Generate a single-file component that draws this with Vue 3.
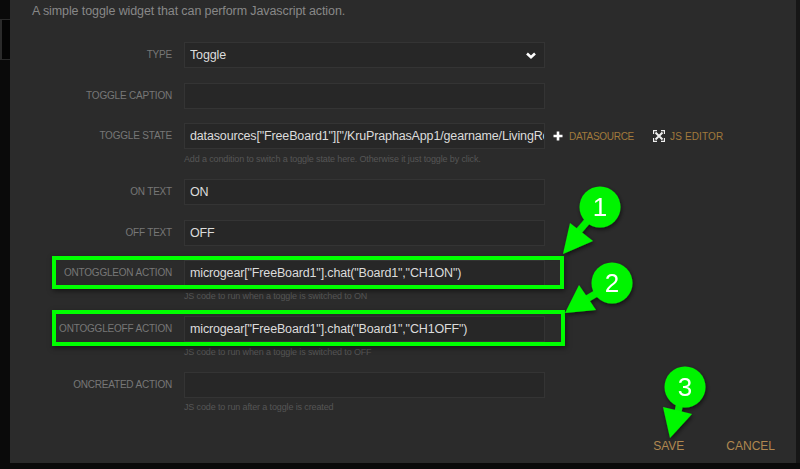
<script setup>
const rows = [
  { label: 'Type', value: 'Toggle', select: true },
  { label: 'Toggle caption', value: '' },
  {
    label: 'Toggle state',
    value: 'datasources["FreeBoard1"]["/KruPraphasApp1/gearname/LivingRoom"]',
    hint: 'Add a condition to switch a toggle state here. Otherwise it just toggle by click.',
    tools: true
  },
  { label: 'On text', value: 'ON' },
  { label: 'Off text', value: 'OFF' },
  {
    label: 'onToggleOn action',
    value: 'microgear["FreeBoard1"].chat("Board1","CH1ON")',
    hint: 'JS code to run when a toggle is switched to ON'
  },
  {
    label: 'onToggleOff action',
    value: 'microgear["FreeBoard1"].chat("Board1","CH1OFF")',
    hint: 'JS code to run when a toggle is switched to OFF'
  },
  { label: 'onCreated action', value: '', hint: 'JS code to run after a toggle is created' }
]
const callouts = [
  { n: 1, cx: 600, cy: 207, head: '563,254 570,223 593,241', shaft: 'M590 218 L578 232' },
  { n: 2, cx: 612, cy: 283, head: '565,313 579,285 596,310', shaft: 'M602 290 L585 300' },
  { n: 3, cx: 685, cy: 387, head: '670,438 663,407 692,414', shaft: 'M680 402 L678 412' }
]
</script>

<template>
  <div class="page">
    <aside class="side">
      <div class="side-gap"></div>
      <div class="side-box"></div>
    </aside>

    <main class="modal">
      <p class="intro">A simple toggle widget that can perform Javascript action.</p>
      <form class="form" @submit.prevent>
        <div v-for="row in rows" :key="row.label" class="row">
          <label class="label">{{ row.label }}</label>
          <div class="body">
            <div class="line">
              <div class="input">
                <span class="value">{{ row.value }}</span>
                <svg v-if="row.select" class="chevron" width="10" height="7" viewBox="0 0 10 7">
                  <path d="M1 1.5 L5 5.2 L9 1.5" fill="none" stroke="#fff" stroke-width="2.6" />
                </svg>
              </div>
              <div v-if="row.tools" class="tools">
                <span class="tool plus">
                  <svg width="10" height="10" viewBox="0 0 10 10">
                    <path d="M5 0.5 V9.5 M0.5 5 H9.5" stroke="#fff" stroke-width="2.6" />
                  </svg>
                  DATASOURCE
                </span>
                <span class="tool js">
                  <svg width="12" height="12" viewBox="0 0 12 12">
                    <path d="M2.5 2.5 L9.5 9.5 M9.5 2.5 L2.5 9.5" stroke="#eee" stroke-width="2" />
                    <path d="M0.5 4 V0.5 H4 M8 0.5 H11.5 V4 M11.5 8 V11.5 H8 M4 11.5 H0.5 V8" fill="none" stroke="#eee" stroke-width="1.3" />
                  </svg>
                  JS EDITOR
                </span>
              </div>
            </div>
            <div v-if="row.hint" class="hint">{{ row.hint }}</div>
          </div>
        </div>
      </form>
      <footer class="actions">
        <button type="button" class="action">Save</button>
        <button type="button" class="action">Cancel</button>
      </footer>
    </main>

    <div class="edge"></div>

    <!-- annotations painted over the screenshot -->
    <div class="mark mark-on"></div>
    <div class="mark mark-off"></div>
    <svg class="callouts" width="800" height="469" viewBox="0 0 800 469">
      <defs>
        <filter id="drop" x="-30%" y="-30%" width="160%" height="160%">
          <feDropShadow dx="1" dy="2" stdDeviation="2" flood-color="#000" flood-opacity="0.6" />
        </filter>
      </defs>
      <g v-for="c in callouts" :key="c.n" filter="url(#drop)">
        <path :d="c.shaft" stroke="#00f000" stroke-width="7" fill="none" />
        <polygon :points="c.head" fill="#00f800" />
        <circle :cx="c.cx" :cy="c.cy" r="20.5" fill="#00f400" />
        <text :x="c.cx" :y="c.cy + 9" class="num" text-anchor="middle">{{ c.n }}</text>
      </g>
    </svg>
  </div>
</template>

<style>
html, body { margin: 0; background: #0a0a0a; overflow: hidden; }
</style>

<style scoped>
.page {
  position: relative;
  display: flex;
  width: 800px;
  height: 469px;
  overflow: hidden;
  background: #0a0a0a;
  font-family: "Liberation Sans", Arial, sans-serif;
}
.side { width: 10px; flex: none; display: flex; flex-direction: column; }
.side-gap { height: 19px; }
.side-box {
  height: 39px;
  border: 1px solid #2a2a2a;
  border-left-width: 2px;
  border-right: 0;
  background: #040404;
  box-sizing: content-box;
}
.modal {
  width: 786px;
  height: 463px;
  flex: none;
  display: flex;
  flex-direction: column;
  background: #2b2b2b;
}
.edge { flex: 1; height: 463px; background: #161616; }
.intro {
  margin: 3px 0 0 22px;
  font-size: 12.5px;
  letter-spacing: -0.1px;
  line-height: 16px;
  color: #888;
}
.form { margin-top: 23px; flex: 1; }
.row { display: flex; margin-bottom: 14.7px; }
.label {
  width: 162px;
  flex: none;
  margin-top: 7px;
  font-size: 10px;
  letter-spacing: -0.2px;
  line-height: 12px;
  text-align: right;
  text-transform: uppercase;
  color: #777;
}
.body { margin-left: 12px; }
.line { display: flex; align-items: center; }
.input {
  box-sizing: border-box;
  width: 361px;
  height: 26px;
  display: flex;
  align-items: center;
  justify-content: space-between;
  padding: 0 0 0 5px;
  border: 1px solid #343434;
  background: #272727;
  overflow: hidden;
}
.value {
  flex: 1;
  min-width: 0;
  overflow: hidden;
  font-size: 12.5px;
  letter-spacing: -0.15px;
  color: #dcdcdc;
  white-space: nowrap;
}
.chevron { flex: none; margin-right: 8px; }
.tools { display: flex; align-items: center; font-size: 10px; letter-spacing: -0.3px; color: #a27a3c; }
.tool { display: flex; align-items: center; white-space: nowrap; }
.plus { margin-left: 8px; gap: 6px; }
.js { margin-left: 19px; gap: 5px; letter-spacing: 0.15px; }
.hint {
  margin-top: 4.5px;
  font-size: 9px;
  letter-spacing: -0.13px;
  line-height: 10.5px;
  height: 10.5px;
  color: #565656;
  white-space: nowrap;
}
.actions {
  display: flex;
  justify-content: flex-end;
  gap: 42px;
  padding: 0 21px 10px 0;
}
.action {
  padding: 0;
  border: 0;
  background: none;
  font: 12px/14px "Liberation Sans", Arial, sans-serif;
  text-transform: uppercase;
  color: #b08850;
}
.mark {
  position: absolute;
  left: 52px;
  box-sizing: border-box;
  border: 4px solid #00ff00;
  box-shadow: 1px 2px 5px rgba(0, 0, 0, 0.5);
}
.mark-on { top: 256px; width: 512px; height: 33px; }
.mark-off { top: 310px; width: 513px; height: 36px; }
.callouts { position: absolute; left: 0; top: 0; }
.num { font: 26px "Liberation Sans", Arial, sans-serif; fill: #fff; }
</style>
